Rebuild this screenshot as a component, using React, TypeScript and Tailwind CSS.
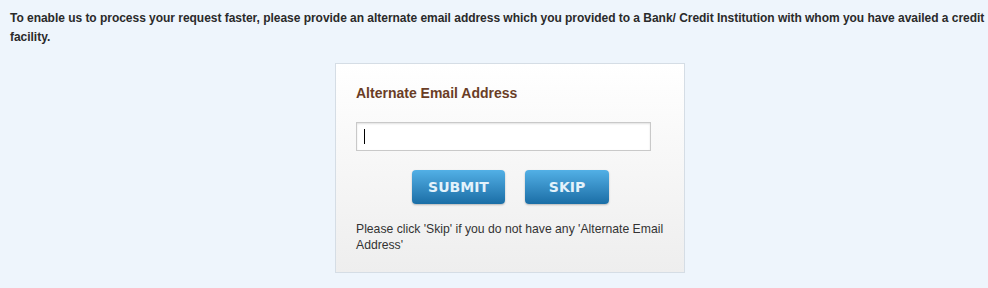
import React, { useState } from 'react';

// --- Alternate email prompt ---
export default function App() {
  const [email, setEmail] = useState('');

  return (
    <div className="min-h-[288px] w-full bg-[#eef5fc] font-['Liberation_Sans',Arial,sans-serif]">
      <p className="pl-[10px] pt-[9px] text-[12px] font-bold leading-[19px] tracking-[-0.03px] text-[#2a2a2a]">
        To enable us to process your request faster, please provide an alternate email address which you provided to a Bank/ Credit Institution with whom you have availed a credit facility.
      </p>

      <div className="flex justify-center pt-[16px] pl-[32px]">
        <div className="w-[350px] border border-[#d5dde5] bg-gradient-to-b from-white to-[#eeeeee] px-[20px] pt-[19px] pb-[19px]">
          <h3 className="text-[14px] font-bold leading-[20px] text-[#6a3d26]">Alternate Email Address</h3>

          <div className="relative mt-[19px] w-[295px]">
            <input
              type="text"
              value={email}
              autoFocus
              onChange={(e) => setEmail(e.target.value)}
              className="block h-[29px] w-[295px] border border-[#c9c9c9] bg-white px-[7px] text-[12px] text-[#222] shadow-[inset_0_1px_2px_rgba(0,0,0,0.12)] outline-none"
            />
            {email === '' && (
              <span className="pointer-events-none absolute left-[8px] top-[7px] h-[15px] w-px bg-black" />
            )}
          </div>

          <div className="mt-[19px] flex gap-[20px] pl-[56px]">
            <button
              type="button"
              className="h-[34px] w-[93px] rounded-[4px] bg-gradient-to-b from-[#52b0e6] to-[#1a6ea6] font-['DejaVu_Sans',Verdana,sans-serif] text-[14px] font-bold text-[#e3f2fb] shadow-[0_1px_2px_rgba(0,0,0,0.25)]"
            >
              SUBMIT
            </button>
            <button
              type="button"
              className="h-[34px] w-[84px] rounded-[4px] bg-gradient-to-b from-[#52b0e6] to-[#1a6ea6] font-['DejaVu_Sans',Verdana,sans-serif] text-[14px] font-bold text-[#e3f2fb] shadow-[0_1px_2px_rgba(0,0,0,0.25)]"
            >
              SKIP
            </button>
          </div>

          <p className="mt-[17px] w-[312px] text-[12.2px] leading-[16px] text-[#333]">
            Please click 'Skip' if you do not have any 'Alternate Email Address'
          </p>
        </div>
      </div>
    </div>
  );
}
